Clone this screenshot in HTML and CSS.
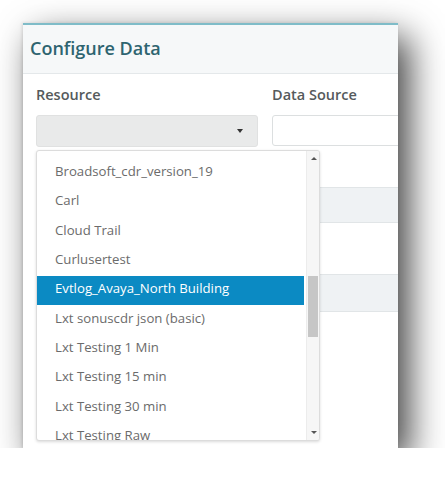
FILE: index.html
```html
<!DOCTYPE html>
<html>
<head>
<meta charset="utf-8">
<link rel="stylesheet" href="styles.css">
</head>
<body>
<div class="panel">
  <div class="panel-header">Configure Data</div>
  <div class="panel-body">
    <div class="fields">
      <div class="field">
        <div class="label">Resource</div>
        <div class="select"><span class="caret"></span></div>
      </div>
      <div class="field">
        <div class="label">Data Source</div>
        <div class="input"></div>
      </div>
    </div>
    <div class="band band-1"></div>
    <div class="band band-2"></div>
  </div>
  <div class="dropdown">
    <ul class="options">
      <li>Broadsoft_cdr_version_19</li>
      <li>Carl</li>
      <li>Cloud Trail</li>
      <li>Curlusertest</li>
      <li class="active">Evtlog_Avaya_North Building</li>
      <li>Lxt sonuscdr json (basic)</li>
      <li>Lxt Testing 1 Min</li>
      <li>Lxt Testing 15 min</li>
      <li>Lxt Testing 30 min</li>
      <li>Lxt Testing Raw</li>
    </ul>
    <div class="scrollbar">
      <span class="arrow up"></span>
      <span class="thumb"></span>
      <span class="arrow down"></span>
    </div>
  </div>
</div>
</body>
</html>
```
FILE: styles.css
```css
html, body {
  margin: 0;
  padding: 0;
  background: #ffffff;
}
body {
  padding: 23px 0 0 23px;
  font-family: "Open Sans", "Liberation Sans", sans-serif;
}
.panel {
  position: relative;
  width: 375px;
  height: 425px;
  overflow: hidden;
  background: #ffffff;
  box-shadow: 11px 14px 34px rgba(0, 0, 0, 0.75), -1px 0 3px rgba(0, 0, 0, 0.12);
}
.panel-header {
  box-sizing: border-box;
  height: 51px;
  border-top: 2px solid #7fbcc8;
  border-bottom: 1px solid #e4e8ea;
  background: #f6f8f9;
  padding-left: 7px;
  font-size: 18px;
  font-weight: 600;
  color: #2e6470;
  line-height: 46px;
}
.panel-body {
  padding-left: 13px;
}
.fields {
  display: flex;
  gap: 14px;
  padding-top: 11px;
}
.label {
  font-size: 14.5px;
  font-weight: 600;
  color: #555a5c;
  line-height: 20px;
  margin-bottom: 10px;
}
.select {
  position: relative;
  box-sizing: border-box;
  width: 222px;
  height: 32px;
  background: #e9eaea;
  border: 1px solid #e0e1e1;
  border-radius: 3px;
}
.caret {
  position: absolute;
  right: 14px;
  top: 13px;
  width: 0;
  height: 0;
  border-left: 3px solid transparent;
  border-right: 3px solid transparent;
  border-top: 4px solid #333;
}
.input {
  box-sizing: border-box;
  width: 200px;
  height: 31px;
  background: #fff;
  border: 1px solid #dcdfe0;
  border-radius: 3px;
}
.band {
  box-sizing: border-box;
  background: #eff2f4;
  border-top: 1px solid #e1e5e7;
  border-bottom: 1px solid #e1e5e7;
}
.band-1 {
  margin-top: 40px;
  height: 36px;
}
.band-2 {
  margin-top: 51px;
  height: 38px;
}
.dropdown {
  position: absolute;
  left: 13px;
  top: 127px;
  width: 284px;
  height: 291px;
  box-sizing: border-box;
  display: flex;
  background: #fff;
  border: 1px solid #dcdcdc;
  border-radius: 3px;
  box-shadow: 0 1px 3px rgba(0, 0, 0, 0.15);
  overflow: hidden;
}
.options {
  list-style: none;
  margin: 0;
  padding: 8px 0 0 0;
  width: 267px;
  flex: none;
}
.options li {
  box-sizing: border-box;
  height: 29.3px;
  padding: 0 0 5px 18px;
  display: flex;
  align-items: center;
  font-size: 13.2px;
  color: #6b6b6b;
  white-space: nowrap;
}
.options li.active {
  background: #0b8ac3;
  color: #ffffff;
}
.scrollbar {
  position: relative;
  flex: 1;
  background: #f6f6f6;
  border-left: 1px solid #ececec;
  margin-left: 2px;
}
.thumb {
  position: absolute;
  left: 1px;
  right: 1px;
  top: 125px;
  height: 61px;
  background: #c6c6c6;
}
.arrow {
  position: absolute;
  left: 4px;
  width: 0;
  height: 0;
  border-left: 3px solid transparent;
  border-right: 3px solid transparent;
}
.arrow.up {
  top: 6px;
  border-bottom: 3px solid #555;
}
.arrow.down {
  bottom: 6px;
  border-top: 3px solid #555;
}
```
